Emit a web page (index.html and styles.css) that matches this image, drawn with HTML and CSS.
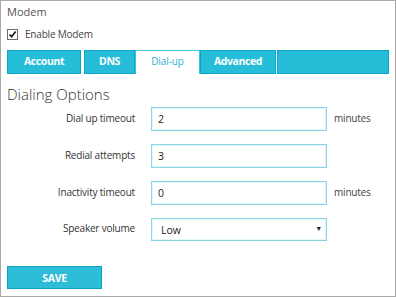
FILE: index.html
```html
<!DOCTYPE html>
<html lang="en">
<head>
  <meta charset="UTF-8">
  <title>Modem</title>
  <link rel="stylesheet" href="styles.css">
</head>
<body>
  <div class="panel">
    <div class="titulo">Modem</div>

    <label class="check-row">
      <span class="caja">
        <svg width="9" height="9" viewBox="0 0 9 9"><path d="M1.5 4.5 L3.6 6.8 L7.6 1.6" fill="none" stroke="#111" stroke-width="1.6"/></svg>
      </span>
      Enable Modem
    </label>

    <div class="tabs">
      <div class="tab tab-account">Account</div>
      <div class="tab tab-dns">DNS</div>
      <div class="tab tab-activo">Dial-up</div>
      <div class="tab tab-advanced">Advanced</div>
      <div class="tab tab-vacio"></div>
    </div>

    <h2>Dialing Options</h2>

    <form class="opciones">
      <label for="dialTimeout">Dial up timeout</label>
      <input type="text" id="dialTimeout" value="2">
      <span class="unidad">minutes</span>

      <label for="redial">Redial attempts</label>
      <input type="text" id="redial" value="3">
      <span class="unidad"></span>

      <label for="inactividad">Inactivity timeout</label>
      <input type="text" id="inactividad" value="0">
      <span class="unidad">minutes</span>

      <label for="volumen">Speaker volume</label>
      <div class="select-caja">
        <select id="volumen">
          <option>Low</option>
          <option>Medium</option>
          <option>High</option>
        </select>
        <span class="flecha">&#9660;</span>
      </div>
      <span class="unidad"></span>
    </form>

    <button type="button" class="guardar">SAVE</button>
  </div>
</body>
</html>
```

FILE: styles.css
```css
/* --- General --- */
body {
  margin: 0;
  font-family: 'Open Sans', sans-serif;
  font-size: 10px;
  letter-spacing: -0.2px;
  color: #333;
  background: #fff;
}

.panel {
  width: 396px;
  height: 297px;
  box-sizing: border-box;
  border: 1px solid #a9a9a9;
  padding: 3px 0 0 6px;
  display: flex;
  flex-direction: column;
  align-items: flex-start;
}

.titulo {
  font-size: 11px;
  letter-spacing: 0;
  line-height: 15px;
  color: #555;
}

.check-row {
  display: flex;
  align-items: center;
  gap: 7px;
  margin-top: 8px;
  line-height: 15px;
  color: #444;
}

.caja {
  width: 9px;
  height: 9px;
  border: 1px solid #6d6d6d;
  background: #fff;
  display: flex;
  align-items: center;
  justify-content: center;
}

/* --- Tabs --- */
.tabs {
  display: flex;
  margin-top: 8px;
  height: 24px;
}

.tab {
  box-sizing: border-box;
  height: 24px;
  background: #25bdd8;
  border: 1px solid #0aa8c8;
  color: #fff;
  font-size: 10.5px;
  font-weight: bold;
  letter-spacing: -0.4px;
  text-align: center;
  line-height: 21px;
}

.tab-account { width: 74px; margin-right: 3px; }
.tab-dns { width: 51px; }
.tab-activo {
  width: 65px;
  background: #fff;
  border-color: #3cc3dc;
  border-bottom: none;
  color: #2fb4d2;
  font-size: 10px;
  font-weight: normal;
  letter-spacing: -0.1px;
}
.tab-advanced { width: 76px; margin-right: 1px; }
.tab-vacio { width: 112px; }

h2 {
  margin: 10px 0 0;
  font-size: 15px;
  letter-spacing: 0;
  line-height: 20px;
  font-weight: 300;
  color: #333;
}

/* --- Form --- */
.opciones {
  display: grid;
  grid-template-columns: 128px 176px auto;
  column-gap: 16px;
  row-gap: 13px;
  align-items: center;
  margin-top: 3px;
}

.opciones label {
  text-align: right;
  padding-bottom: 3px;
  color: #333;
}

.opciones input,
.opciones select {
  box-sizing: border-box;
  width: 176px;
  height: 24px;
  border: 1px solid #86d6e5;
  box-shadow: inset 0 0 0 1px #e3f6fa;
  padding: 0 6px;
  font-family: 'Open Sans', sans-serif;
  font-size: 10.5px;
  color: #222;
  outline: none;
  background: #fff;
}

.unidad {
  margin-left: -9px;
  padding-bottom: 2px;
  color: #444;
}

.select-caja {
  position: relative;
  height: 23px;
}

.opciones select {
  height: 23px;
  padding-left: 9px;
  appearance: none;
  -webkit-appearance: none;
  border-radius: 0;
}

.flecha {
  position: absolute;
  right: 5px;
  top: 6px;
  font-size: 7px;
  color: #222;
  pointer-events: none;
}

/* --- Button --- */
.guardar {
  margin-top: 25px;
  width: 95px;
  height: 23px;
  background: #2dbdd7;
  border: 1px solid #0aa2c2;
  color: #fff;
  font-family: 'Open Sans', sans-serif;
  font-size: 10.5px;
  font-weight: bold;
  letter-spacing: -0.3px;
  cursor: pointer;
}
```
